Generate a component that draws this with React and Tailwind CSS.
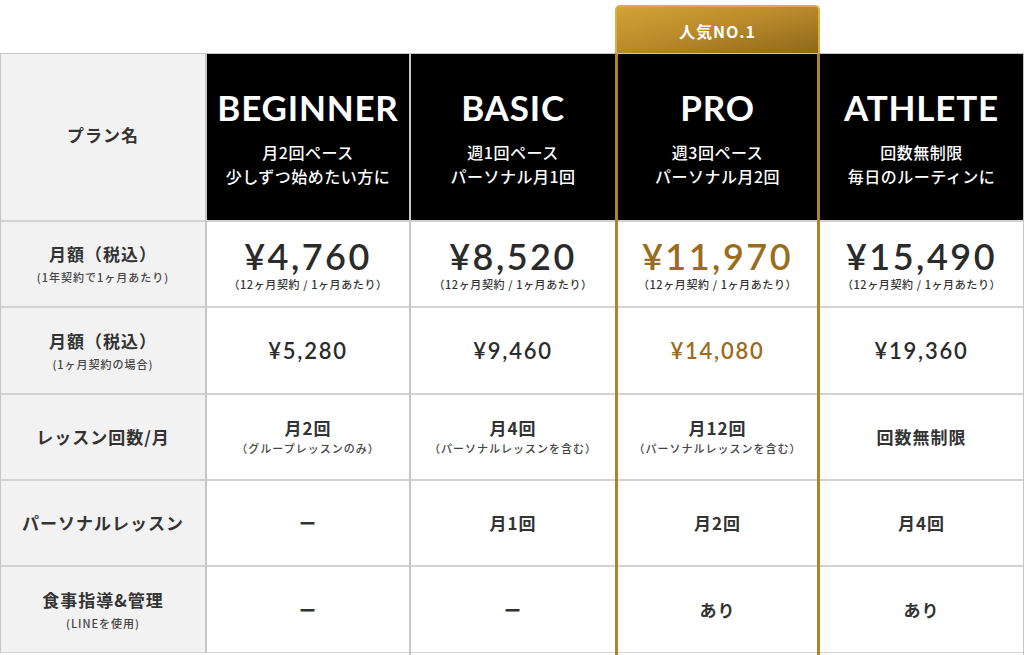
import React from "react";

const rowH = ["h-[86px]", "h-[87px]", "h-[86px]", "h-[86px]", "h-[86px]"];

const labels = [
  { main: "月額（税込）", sub: "(1年契約で1ヶ月あたり)" },
  { main: "月額（税込）", sub: "(1ヶ月契約の場合)" },
  { main: "レッスン回数/月" },
  { main: "パーソナルレッスン" },
  { main: "食事指導&管理", sub: "(LINEを使用)" },
];

const plans = [
  {
    name: "BEGINNER",
    l1: "月2回ペース",
    l2: "少しずつ始めたい方に",
    price: "¥4,760",
    monthly: "¥5,280",
    lessons: "月2回",
    lessonsSub: "（グループレッスンのみ）",
    personal: "ー",
    food: "ー",
  },
  {
    name: "BASIC",
    l1: "週1回ペース",
    l2: "パーソナル月1回",
    price: "¥8,520",
    monthly: "¥9,460",
    lessons: "月4回",
    lessonsSub: "（パーソナルレッスンを含む）",
    personal: "月1回",
    food: "ー",
  },
  {
    name: "PRO",
    l1: "週3回ペース",
    l2: "パーソナル月2回",
    price: "¥11,970",
    monthly: "¥14,080",
    lessons: "月12回",
    lessonsSub: "（パーソナルレッスンを含む）",
    personal: "月2回",
    food: "あり",
    pro: true,
  },
  {
    name: "ATHLETE",
    l1: "回数無制限",
    l2: "毎日のルーティンに",
    price: "¥15,490",
    monthly: "¥19,360",
    lessons: "回数無制限",
    personal: "月4回",
    food: "あり",
  },
];

function LabelColumn() {
  return (
    <div className="flex flex-col w-[207px] shrink-0">
      <div className="h-[53px]" />
      <div className="border-t border-l border-r-2 border-[#c6c6c6] bg-[#f2f2f2]">
        <div className="h-[168px] border-b-2 border-[#d2d2d2] flex items-center justify-center pb-[4px]">
          <span className="text-[17px] font-bold text-[#333] tracking-[1px]">プラン名</span>
        </div>
        {labels.map((l, i) => (
          <div
            key={i}
            className={`${rowH[i]} ${i < 4 ? "border-b-2" : "border-b"} border-[#d2d2d2] flex flex-col items-center justify-center`}
          >
            <span className="text-[17px] font-bold text-[#333] leading-[26px] tracking-[1px]">{l.main}</span>
            {l.sub && (
              <span className="text-[11px] text-[#444] leading-[20px] font-medium tracking-[1px]">{l.sub}</span>
            )}
          </div>
        ))}
      </div>
    </div>
  );
}

function PlanColumn({ p, widthCls, borderCls }) {
  const gold = p.pro;
  const txt = gold ? "text-[#9a6c1c]" : "text-[#2b2b2b]";
  const cell = (i, children) => (
    <div
      className={`${rowH[i]} ${i < 4 ? "border-b-2" : "border-b"} border-b-[#d2d2d2] flex flex-col items-center justify-center bg-white`}
    >
      {children}
    </div>
  );
  return (
    <div className={`flex flex-col ${widthCls} shrink-0`}>
      {gold ? (
        <div className="h-[53px] pt-[5px] flex flex-col">
          <div className="flex-1 rounded-t-[5px] border-2 border-b-0 border-[#d8ae45] bg-linear-to-br from-[#d3a335] via-[#b8892a] to-[#8e671c] flex items-center justify-center pt-[1px]">
            <span className="text-white text-[16px] font-bold tracking-[1px]">人気NO.1</span>
          </div>
        </div>
      ) : (
        <div className="h-[53px]" />
      )}
      <div className={`flex flex-col flex-1 border-t border-t-[#c6c6c6] ${borderCls}`}>
        <div className="h-[168px] border-b-2 border-b-[#d2d2d2] bg-black flex flex-col items-center">
          <div className="pt-[33px] text-white text-[35px] font-bold leading-[40px] tracking-[0.8px] font-['Lato',sans-serif]">
            {p.name}
          </div>
          <div className="mt-[13px] text-white text-[16px] font-medium leading-[24px] text-center tracking-[0.5px]">
            <div>{p.l1}</div>
            <div>{p.l2}</div>
          </div>
        </div>
        {cell(
          0,
          <>
            <span className={`${txt} text-[36px] font-semibold leading-[38px] tracking-[2.5px] font-['Lato',sans-serif]`}>{p.price}</span>
            <span className="text-[#333] text-[11px] font-medium leading-[16px] mt-[1px] tracking-[0.6px]">（12ヶ月契約 / 1ヶ月あたり）</span>
          </>
        )}
        {cell(
          1,
          <span className={`${txt} text-[22px] font-semibold tracking-[1.8px] pb-[1px] font-['Lato',sans-serif]`}>{p.monthly}</span>
        )}
        {cell(
          2,
          <>
            <span className="text-[#333] text-[17px] font-bold leading-[22px] tracking-[1px]">{p.lessons}</span>
            {p.lessonsSub && (
              <span className="text-[#444] text-[11px] font-medium leading-[18px] tracking-[1px]">{p.lessonsSub}</span>
            )}
          </>
        )}
        {cell(3, <span className="text-[#333] text-[17px] font-bold tracking-[1px]">{p.personal}</span>)}
        {cell(4, <span className="text-[#333] text-[17px] font-bold tracking-[1px]">{p.food}</span>)}
      </div>
    </div>
  );
}

export default function App() {
  return (
    <div className="w-[1024px] h-[655px] bg-white flex overflow-hidden font-['Noto_Sans_CJK_JP','Noto_Sans',sans-serif]">
      <LabelColumn />
      <PlanColumn p={plans[0]} widthCls="w-[204px]" borderCls="border-r-2 border-r-[#c6c6c6]" />
      <PlanColumn p={plans[1]} widthCls="w-[204px]" borderCls="" />
      <PlanColumn p={plans[2]} widthCls="w-[205px]" borderCls="border-x-[3px] border-x-[#b0832a]" />
      <PlanColumn p={plans[3]} widthCls="w-[204px]" borderCls="border-r border-r-[#c6c6c6]" />
    </div>
  );
}
